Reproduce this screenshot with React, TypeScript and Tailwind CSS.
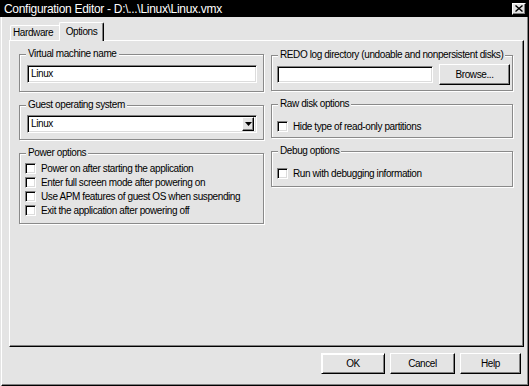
import React from "react";

const raised =
  "bg-[#e4e4e4] border border-t-white border-l-white border-r-black border-b-black shadow-[inset_-1px_-1px_0_#808080]";
const sunken =
  "bg-white border border-t-[#808080] border-l-[#808080] border-r-white border-b-white shadow-[inset_1px_1px_0_#000,inset_-1px_-1px_0_#dcdcdc]";

function Group({
  label,
  className,
  children,
}: {
  label: string;
  className: string;
  children?: React.ReactNode;
}) {
  return (
    <div
      className={`relative border border-[#8a8a8a] shadow-[1px_1px_0_#fff,inset_1px_1px_0_#fff] ${className}`}
    >
      <span className="absolute left-[6px] top-[-7px] bg-[#e4e4e4] px-[2px] leading-[12px]">
        {label}
      </span>
      {children}
    </div>
  );
}

function Check({ label }: { label: string }) {
  return (
    <div className="flex h-[13px] items-center gap-[5px]">
      <div className={`h-[11px] w-[11px] ${sunken}`} />
      <span className="leading-[12px]">{label}</span>
    </div>
  );
}

function Btn({ label, className }: { label: string; className: string }) {
  return (
    <div className={`flex h-[21px] items-center justify-center ${raised} ${className}`}>
      {label}
    </div>
  );
}

export default function App() {
  return (
    <div className="flex h-[386px] w-[529px] flex-col overflow-hidden bg-[#e4e4e4] font-['Liberation_Sans',Arial,sans-serif] text-[10px] tracking-[-0.4px] text-black">
      {/* title bar */}
      <div className="flex h-[17px] shrink-0 items-center justify-between bg-black pl-[4px] pr-[3px]">
        <span className="text-[12px] leading-[14px] tracking-[-0.3px] text-white">
          Configuration Editor - D:\...\Linux\Linux.vmx
        </span>
        <div className={`flex h-[12px] w-[14px] items-center justify-center ${raised}`}>
          <svg width="8" height="7" viewBox="0 0 8 7">
            <path d="M0.5 0.5 L7.5 6.5 M7.5 0.5 L0.5 6.5" stroke="#000" strokeWidth="1.4" />
          </svg>
        </div>
      </div>

      <div className="ml-px flex flex-1 flex-col border-b border-l border-r border-b-black border-l-white border-r-black shadow-[inset_-1px_-1px_0_#808080]">
        {/* tabs */}
        <div className="ml-[8px] flex h-[23px] shrink-0 items-end">
          <div className="flex h-[15px] w-[49px] items-center rounded-tl-[2px] border-l border-t border-l-white border-t-white pl-[2px] leading-[12px]">
            Hardware
          </div>
          <div className="relative z-10 -mb-px flex h-[19px] w-[45px] items-start justify-center rounded-t-[2px] border-l border-r border-t border-l-white border-r-black border-t-white bg-[#e4e4e4] pt-[3px] leading-[12px] shadow-[inset_-1px_0_0_#808080]">
            Options
          </div>
        </div>

        {/* tab panel */}
        <div className="ml-[7px] flex h-[307px] w-[515px] shrink-0 gap-[7px] border border-b-black border-l-white border-r-black border-t-white pl-[9px] shadow-[inset_-1px_-1px_0_#808080]">
          <div className="flex w-[245px] flex-col">
            <Group label="Virtual machine name" className="mt-[13px] h-[38px] pl-[7px] pt-[10px]">
              <div className={`flex h-[18px] w-[230px] items-center pl-[3px] leading-[12px] ${sunken}`}>
                Linux
              </div>
            </Group>
            <Group label="Guest operating system" className="mt-[13px] h-[35px] pl-[7px] pt-[9px]">
              <div className={`flex h-[18px] w-[230px] items-center justify-between pl-[3px] pr-[2px] leading-[12px] ${sunken}`}>
                <span>Linux</span>
                <div className={`flex h-[14px] w-[12px] items-center justify-center ${raised}`}>
                  <svg width="7" height="4" viewBox="0 0 7 4">
                    <path d="M0 0 H7 L3.5 4 Z" fill="#000" />
                  </svg>
                </div>
              </div>
            </Group>
            <Group label="Power options" className="mt-[13px] flex h-[71px] flex-col gap-[1px] pl-[5px] pt-[8px]">
              <Check label="Power on after starting the application" />
              <Check label="Enter full screen mode after powering on" />
              <Check label="Use APM features of guest OS when suspending" />
              <Check label="Exit the application after powering off" />
            </Group>
          </div>

          <div className="flex w-[242px] flex-col">
            <Group
              label="REDO log directory (undoable and nonpersistent disks)"
              className="mt-[14px] flex h-[36px] items-start gap-[6px] pl-[5px] pt-[8px]"
            >
              <div className={`mt-[2px] h-[17px] w-[156px] ${sunken}`} />
              <Btn label="Browse..." className="h-[20px] w-[71px]" />
            </Group>
            <Group label="Raw disk options" className="mt-[13px] h-[34px] pl-[5px] pt-[15px]">
              <Check label="Hide type of read-only partitions" />
            </Group>
            <Group label="Debug options" className="mt-[13px] h-[36px] pl-[5px] pt-[15px]">
              <Check label="Run with debugging information" />
            </Group>
          </div>
        </div>

        {/* dialog buttons */}
        <div className="mr-[7px] mt-[6px] flex justify-end gap-[5px]">
          <Btn label="OK" className="w-[64px] border-black shadow-[inset_1px_1px_0_#fff,inset_-1px_-1px_0_#808080]" />
          <Btn label="Cancel" className="w-[65px]" />
          <Btn label="Help" className="w-[61px]" />
        </div>
      </div>
    </div>
  );
}
